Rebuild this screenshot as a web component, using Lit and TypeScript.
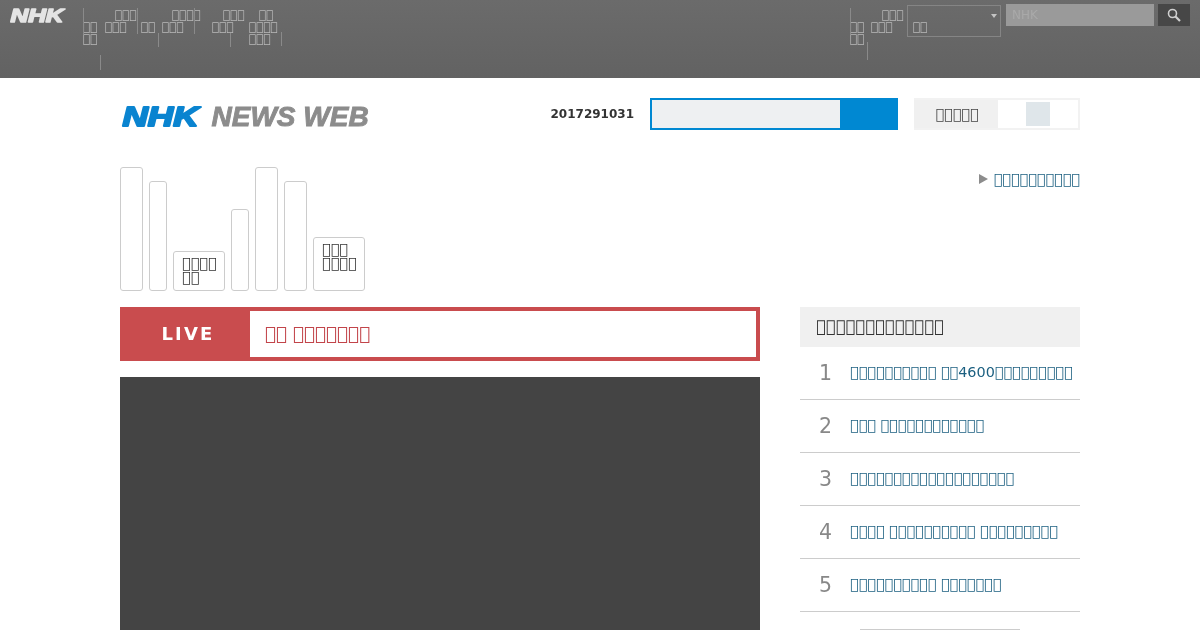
import { LitElement, html, css } from "lit";
import { customElement } from "lit/decorators.js";

const T = "\uE000";
const t = (s: string) => s.replace(/□/g, T);

const NAV: [number, number][][] = [
  [[0, 0], [0, 2], [0, 2]],
  [[10, 3], [0, 3]],
  [[0, 0], [0, 2]],
  [[10, 4], [0, 3]],
  [[11, 3], [0, 3]],
  [[10, 2], [0, 4], [0, 3]],
];
const RIGHT_NAV: [number, number][][] = [
  [[0, 0], [0, 2], [0, 2]],
  [[11, 3], [0, 3]],
];
// x, top, height of the stray separators, in the nav's own coordinates
const SEPS = [
  [0, 8, 26], [54, 8, 26], [111, 8, 26], [75, 33, 14], [147, 33, 14], [198, 32, 14], [17, 55, 15],
];
const RANK = [
  "□□□□□□□□□□ □□4600□□□□□□□□□",
  "□□□ □□□□□□□□□□□□",
  "□□□□□□□□□□□□□□□□□□□",
  "□□□□ □□□□□□□□□□ □□□□□□□□□",
  "□□□□□□□□□□ □□□□□□□",
];
const TABS: [string, string[]][] = [
  ["tall w23", []],
  ["mid w18", []],
  ["box h40", ["□□□□", "□□"]],
  ["low w18", []],
  ["tall w23", []],
  ["mid w23", []],
  ["box h54", ["□□□", "□□□□"]],
];

@customElement("app-root")
export class AppRoot extends LitElement {
  static styles = css`
    :host { display: block; width: 1200px; height: 630px; overflow: hidden; font-family: "DejaVu Sans", sans-serif; will-change: transform; }
    .top { height: 78px; display: flex; background: linear-gradient(#6b6b6b, #626262); color: #b8b8b8; font-size: 12px; line-height: 12px; box-sizing: border-box; padding: 0 10px; }
    .top-logo { display: block; width: 56px; height: 18px; margin: 6px 17px 0 0; }
    .nav { position: relative; display: grid; grid-template-columns: 22px 36px 21px 50px 37px auto; align-content: start; padding-top: 9px; }
    .nav-right { margin-left: auto; display: grid; grid-template-columns: 21px 36px; align-content: start; padding-top: 9px; position: relative; }
    .sep { position: absolute; width: 1px; background: #8a8a8a; }
    .line { height: 12px; white-space: nowrap; }
    .select { box-sizing: border-box; width: 94px; height: 32px; margin: 5px 5px 0 0; border: 1px solid #858585; padding: 15px 0 0 5px; position: relative; }
    .select::after { content: ""; position: absolute; right: 3px; top: 8px; border: 3.5px solid transparent; border-top: 4px solid #c4c4c4; border-bottom: 0; }
    .search { box-sizing: border-box; width: 148px; height: 22px; margin: 4px 4px 0 0; background: #9a9a9a; color: #a9a9a9; padding: 5px 6px; }
    .sbtn { width: 32px; height: 22px; margin-top: 4px; background: #474747; display: flex; align-items: center; justify-content: center; }
    .page { width: 960px; margin: 0 auto; }
    .head { display: flex; align-items: flex-start; padding-top: 20px; }
    .logo { display: block; width: 260px; height: 32px; }
    .date { margin-left: auto; margin-right: 16px; font-size: 12px; line-height: 32px; font-weight: 700; color: #333; }
    .site-search { box-sizing: border-box; width: 248px; height: 32px; border: 2px solid #0088d2; background: #0088d2; margin-right: 16px; }
    .site-search div { width: 188px; height: 28px; background: #eef0f2; }
    .toggle { box-sizing: border-box; width: 166px; height: 32px; border: 2px solid #f2f2f2; display: flex; }
    .toggle-l { box-sizing: border-box; width: 84px; margin-left: -2px; padding-left: 2px; background: #f0f0f0; font-size: 14.4px; line-height: 28px; color: #444; text-align: center; }
    .toggle-r { flex: 1; padding-left: 28px; }
    .toggle-r div { width: 24px; height: 24px; margin-top: 2px; background: #dfe6ea; }
    .tabs-row { display: flex; justify-content: space-between; align-items: flex-start; padding-top: 37px; }
    .tabs { display: flex; align-items: flex-end; gap: 6px; }
    .tab { box-sizing: border-box; border: 1px solid #ccc; border-radius: 3px; font-size: 14.4px; line-height: 14px; color: #333; }
    .tall { height: 124px; } .mid { height: 110px; } .low { height: 82px; }
    .w23 { width: 23px; } .w18 { width: 18px; }
    .box { width: 52px; padding: 4px 0 0 8px; }
    .h40 { height: 40px; } .h54 { height: 54px; }
    .more { display: flex; align-items: center; gap: 6px; font-size: 14.4px; line-height: 24px; color: #1b5f80; }
    .more i { border: 5px solid transparent; border-left: 9px solid #8c8c8c; border-right: 0; }
    .cols { display: flex; justify-content: space-between; padding-top: 16px; }
    .main { width: 640px; }
    .live { box-sizing: border-box; height: 54px; border: 4px solid #c94c4e; display: flex; }
    .live b { box-sizing: border-box; width: 126px; padding-left: 2px; background: #c94c4e; color: #fff; font-size: 18px; line-height: 46px; letter-spacing: 2.2px; text-align: center; }
    .live span { padding-left: 15px; color: #c2444a; font-size: 18.4px; line-height: 46px; }
    .video { height: 253px; margin-top: 16px; background: #444; }
    .side { width: 280px; }
    .side h2 { margin: 0; height: 40px; background: #f0f0f0; font-size: 16.4px; line-height: 40px; font-weight: 400; color: #333; padding-left: 16px; }
    .row { box-sizing: border-box; height: 53px; border-bottom: 1px solid #ccc; display: flex; padding-left: 19px; line-height: 51px; }
    .row b { width: 31px; padding-top: 1px; font-weight: 400; font-size: 20.5px; color: #888; }
    .row span { font-size: 14.4px; color: #1b5f80; white-space: nowrap; }
    .morebtn { box-sizing: border-box; width: 160px; height: 30px; margin: 17px auto 0; border: 1px solid #ccc; }
  `;

  private col(lines: [number, number][]) {
    return html`<div>${lines.map(([o, n]) => html`<div class="line" style="margin-left:${o}px">${T.repeat(n)}</div>`)}</div>`;
  }

  render() {
    return html`
      <div class="top">
        <svg class="top-logo" viewBox="0 0 56 18">
          <text x="0.5" y="15.5" font-family="Liberation Sans" font-weight="700" font-style="italic" font-size="18" textLength="53" lengthAdjust="spacingAndGlyphs" fill="#e4e4e4" stroke="#e4e4e4" stroke-width="1.4" stroke-linejoin="round">NHK</text>
        </svg>
        <div class="nav">
          ${NAV.map((c) => this.col(c))}
          ${SEPS.map(([x, y, h]) => html`<span class="sep" style="left:${x}px;top:${y}px;height:${h}px"></span>`)}
        </div>
        <div class="nav-right">
          ${RIGHT_NAV.map((c) => this.col(c))}
          <span class="sep" style="left:17px;top:42px;height:18px"></span>
          <span class="sep" style="left:0;top:8px;height:26px"></span>
        </div>
        <div class="select">${T}${T}</div>
        <div class="search">NHK</div>
        <div class="sbtn">
          <svg width="14" height="14" viewBox="0 0 14 14" fill="none" stroke="#d0d0d0"><circle cx="5.5" cy="5.5" r="4" stroke-width="1.6"/><path d="M8.5 8.5L13 13" stroke-width="2.2"/></svg>
        </div>
      </div>
      <div class="page">
        <div class="head">
          <svg class="logo" viewBox="0 0 260 32">
            <text x="2.5" y="27.5" font-family="Liberation Sans" font-weight="700" font-style="italic" font-size="28" textLength="76" lengthAdjust="spacingAndGlyphs" fill="#0a84d0" stroke="#0a84d0" stroke-width="2" stroke-linejoin="round">NHK</text>
            <text x="91.5" y="27.5" font-family="Liberation Sans" font-weight="700" font-style="italic" font-size="28" fill="#8c8c8c" stroke="#8c8c8c" stroke-width=".9">NEWS WEB</text>
          </svg>
          <div class="date">2017291031</div>
          <div class="site-search"><div></div></div>
          <div class="toggle">
            <div class="toggle-l">${T.repeat(5)}</div>
            <div class="toggle-r"><div></div></div>
          </div>
        </div>
        <div class="tabs-row">
          <div class="tabs">
            ${TABS.map(([c, lines]) => html`<div class="tab ${c}">${lines.map((l) => html`<div>${t(l)}</div>`)}</div>`)}
          </div>
          <div class="more"><i></i>${T.repeat(10)}</div>
        </div>
        <div class="cols">
          <div class="main">
            <div class="live"><b>LIVE</b><span>${t("□□ □□□□□□□")}</span></div>
            <div class="video"></div>
          </div>
          <div class="side">
            <h2>${T.repeat(13)}</h2>
            ${RANK.map((r, i) => html`<div class="row"><b>${i + 1}</b><span>${t(r)}</span></div>`)}
            <div class="morebtn"></div>
          </div>
        </div>
      </div>
    `;
  }
}
